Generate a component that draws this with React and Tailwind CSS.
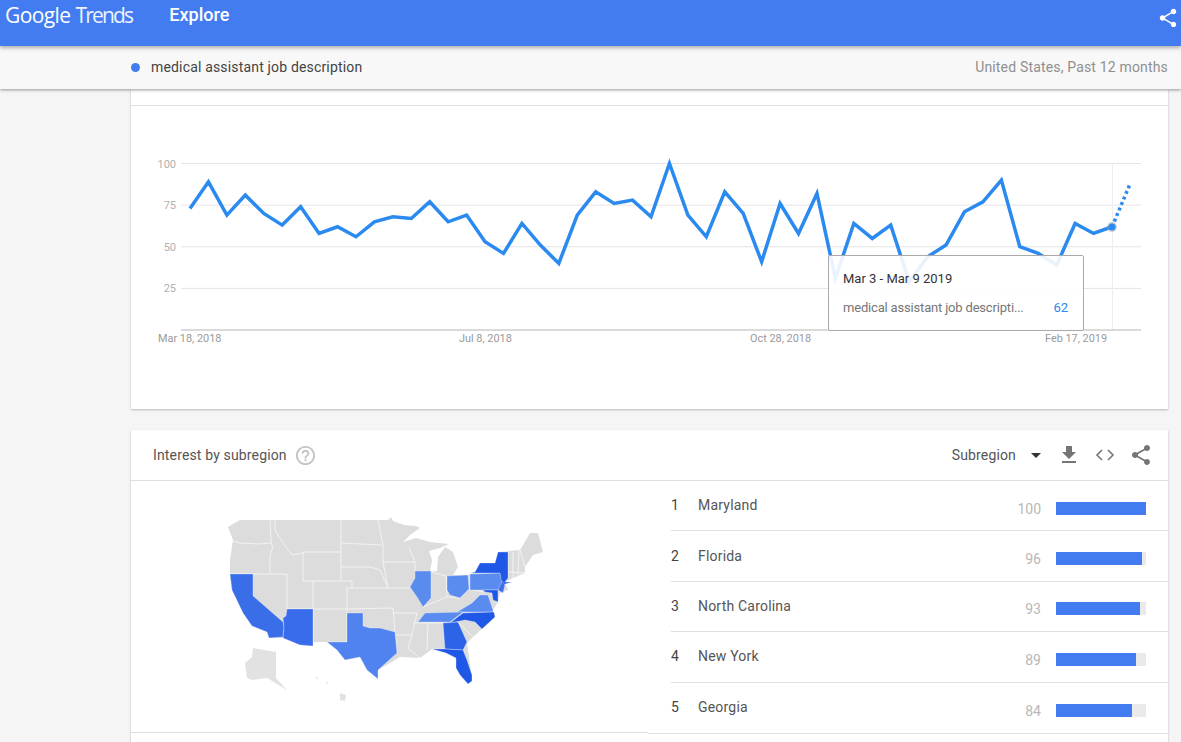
import React from 'react';

const values = [73, 89, 69, 81, 70, 63, 74, 58, 62, 56, 65, 68, 67, 77, 65, 69, 53, 46, 64, 51, 40, 69, 83, 76, 78, 68, 100, 69, 56, 83, 70, 41, 76, 58, 82, 31, 64, 55, 63, 29, 44, 51, 71, 77, 90, 50, 46, 39, 64, 58, 62];

const regions = [
  { rank: 1, name: 'Maryland', value: 100 },
  { rank: 2, name: 'Florida', value: 96 },
  { rank: 3, name: 'North Carolina', value: 93 },
  { rank: 4, name: 'New York', value: 89 },
  { rank: 5, name: 'Georgia', value: 84 },
];

const usOutline = '240,520 388,520 391,517 393,521 404,525 416,526 420,528 410,535 403,542 416,538 430,542 449,544 440,548 429,551 432,560 430,572 437,571 438,557 445,547 453,552 458,567 453,575 468,575 475,572 480,563 495,563 498,552 520,550 530,533 538,533 543,552 533,555 525,567 525,573 513,578 505,582 508,590 500,593 498,602 493,610 495,617 482,629 473,637 467,643 472,680 468,684 458,670 455,657 445,652 432,649 420,658 400,657 378,670 378,679 367,670 360,657 345,660 337,650 327,642 313,642 313,646 300,645 283,638 269,638 267,632 252,626 243,613 232,590 230,575 230,560 233,540 228,527';

const borders = [
  '233,541 240,543 258,544 272,543',
  '270,520 271,543 273,547 270,555 270,574',
  '230,574 287,574 287,609',
  '275,520 275,530 283,543 292,555 303,553',
  '303,552 341,552',
  '341,520 341,581',
  '303,552 303,581 352,581 352,588 347,588 347,642',
  '313,581 313,642',
  '287,609 347,609 393,608',
  '341,543 382,545',
  '341,567 370,567 380,570 388,588',
  '378,520 383,545 383,562 415,562',
  '383,562 388,588 410,588',
  '352,588 388,588',
  '393,608 395,632 397,653',
  '393,613 417,613 412,635 396,635',
  '412,635 408,648 420,658',
  '413,623 428,623 427,650',
  '428,623 443,623',
  '431,572 446,576 447,597',
  '423,607 447,597 460,598',
  '460,598 469,589 483,592',
  '415,562 415,571',
  '409,548 415,562',
  '525,567 520,550',
  '513,552 513,578',
  '519,551 518,575',
  '508,572 525,573',
  '458,622 473,637',
];

const shaded = [
  { color: '#396ee8', points: '230,574 253,574 253,596 283,622 284,627 283,637 269,638 267,632 252,626 243,613 232,590' },
  { color: '#386cea', points: '287,609 313,609 313,646 300,645 283,638 284,627 283,618 286,616' },
  { color: '#5083ef', points: '347,613 363,613 363,626 370,628 380,628 395,632 397,653 378,670 378,679 367,670 360,657 345,660 337,650 327,642 347,642' },
  { color: '#5a8cf0', points: '415,571 431,571 431,598 423,607 417,597 410,587 415,578' },
  { color: '#5a8cf0', points: '447,576 468,575 469,589 460,598 450,595 447,590' },
  { color: '#5a8cf0', points: '470,574 500,573 503,585 498,590 470,590' },
  { color: '#5a8cf0', points: '457,612 472,603 480,595 488,595 493,610 493,612' },
  { color: '#5a8cf0', points: '425,613 463,612 450,622 418,622' },
  { color: '#1f57e7', points: '475,572 480,563 495,563 498,552 508,552 508,578 505,582 512,582 502,585 500,573 470,573' },
  { color: '#3c70ea', points: '502,581 505,585 503,593 498,590' },
  { color: '#1f57e7', points: '483,590 498,590 498,602 493,600 492,593 485,592' },
  { color: '#1f57e7', points: '463,613 494,612 495,617 482,629 475,622 465,620 450,623' },
  { color: '#2c64e8', points: '443,623 458,622 467,642 463,650 445,649' },
  { color: '#1f57e7', points: '432,649 445,649 463,650 467,660 472,675 472,681 468,684 460,675 456,668 456,658 446,653' },
];

const UsMap = () => (
  <svg width="350" height="200" viewBox="210 510 350 200">
    <polygon points={usOutline} fill="#dcdcdc" />
    {borders.map((b) => (
      <polyline key={b} points={b} fill="none" stroke="#f4f4f4" strokeWidth="0.9" />
    ))}
    {shaded.map((s) => (
      <polygon key={s.points} points={s.points} fill={s.color} stroke="#ffffff" strokeOpacity="0.5" strokeWidth="0.6" />
    ))}
    <polygon points="253,648 276,652 276,678 287,690 267,678 252,680 247,678 245,663 252,657" fill="#e2e2e2" />
    <polygon points="340,693 346,695 345,701 340,700" fill="#e2e2e2" />
    <circle cx="327" cy="683" r="1.2" fill="#ececec" />
    <circle cx="317" cy="678" r="1.2" fill="#ececec" />
  </svg>
);

const ShareIcon = ({ className }) => (
  <svg className={className} viewBox="0 0 24 24" fill="currentColor">
    <path d="M18 16.08c-.76 0-1.44.3-1.96.77L8.91 12.7c.05-.23.09-.46.09-.7s-.04-.47-.09-.7l7.05-4.11c.54.5 1.25.81 2.04.81 1.66 0 3-1.34 3-3s-1.34-3-3-3-3 1.34-3 3c0 .24.04.47.09.7L8.04 9.81C7.5 9.31 6.79 9 6 9c-1.66 0-3 1.34-3 3s1.34 3 3 3c.79 0 1.5-.31 2.04-.81l7.12 4.16c-.05.21-.08.43-.08.65 0 1.61 1.31 2.92 2.92 2.92 1.61 0 2.92-1.31 2.92-2.92s-1.31-2.92-2.92-2.92z" />
  </svg>
);

const TrendChart = () => {
  const xAt = (i) => 190 + i * 18.44;
  const yAt = (v) => 330 - v * 1.665;
  const line = values.map((v, i) => `${xAt(i)},${yAt(v)}`).join(' ');

  return (
    <svg className="block" width="1037" height="303" viewBox="131 106 1037 303">
      {[100, 75, 50, 25].map((v) => (
        <g key={v}>
          <line x1="181" x2="1141" y1={yAt(v)} y2={yAt(v)} stroke="#e4e4e4" />
          <text x="176" y={yAt(v) + 4} textAnchor="end" fontSize="11" fill="#b0b0b0">{v}</text>
        </g>
      ))}
      <line x1="1112.5" x2="1112.5" y1="163" y2="330" stroke="#eeeeee" />
      <line x1="181" x2="1141" y1="330" y2="330" stroke="#b5b5b5" />
      <polyline points={line} fill="none" stroke="#2a8aef" strokeWidth="3.5" strokeLinejoin="miter" />
      <line x1="1112" y1="227" x2="1130" y2="184" stroke="#2a8aef" strokeWidth="3.5" strokeDasharray="3 3" />
      <circle cx="1112" cy="227" r="5" fill="#9aa0a6" opacity="0.5" />
      <circle cx="1112" cy="227" r="3.5" fill="#2a8aef" />
      <text x="158" y="342" fontSize="10.9" fill="#9a9a9a">Mar 18, 2018</text>
      <text x="459" y="342" fontSize="10.9" fill="#9a9a9a">Jul 8, 2018</text>
      <text x="750" y="342" fontSize="10.9" fill="#9a9a9a">Oct 28, 2018</text>
      <text x="1045" y="342" fontSize="10.9" fill="#9a9a9a">Feb 17, 2019</text>
    </svg>
  );
};

const App = () => {
  return (
    <div className="relative h-[742px] overflow-hidden bg-[#f5f5f5] font-['Roboto',sans-serif]">
      {/* Top bar */}
      <header className="relative z-20 flex h-[46px] items-start bg-[#427cf0] pl-[5px] pr-[3px] text-white shadow-[0_2px_4px_rgba(0,0,0,0.3)]">
        <span className="mt-[1px] font-['Open_Sans',sans-serif] text-[21px] leading-[28px] tracking-[-0.6px]">Google</span>
        <span className="ml-[5px] mt-[1px] font-['Open_Sans',sans-serif] text-[21px] leading-[28px] tracking-[-1.8px] opacity-90">Trends</span>
        <span className="ml-[37px] mt-[3px] text-[18px] font-medium leading-[24px]">Explore</span>
        <ShareIcon className="ml-auto mt-[7px] h-[22px] w-[22px] translate-x-[1px]" />
      </header>

      {/* Search term bar */}
      <div className="relative z-10 flex h-[43px] items-center bg-[#f8f8f8] pl-[131px] pr-[13px] shadow-[0_1px_3px_rgba(0,0,0,0.4)]">
        <span className="h-[9px] w-[9px] rounded-full bg-[#427cf0]" />
        <span className="ml-[11px] text-[14px] tracking-[0.17px] text-[#444444]">medical assistant job description</span>
        <span className="ml-auto text-[14px] tracking-[0.17px] text-[#8f8f8f]">United States, Past 12 months</span>
      </div>

      <main className="pl-[131px] pr-[13px]">
        {/* Interest over time */}
        <section className="relative bg-white shadow-[0_1px_2px_rgba(0,0,0,0.25)]">
          <div className="h-[17px] border-b border-[#e0e0e0]" />
          <TrendChart />
          <div className="absolute left-[697px] top-[166px] h-[76px] w-[256px] rounded-[2px] border border-[#aaaaaa] bg-white/90 pl-[14px] pr-[15px] pt-[14px]">
            <div className="text-[13px] leading-[17px] text-[#333333]">Mar 3 - Mar 9 2019</div>
            <div className="mt-[12px] flex justify-between text-[13px] leading-[17px]">
              <span className="tracking-[-0.18px] text-[#777777]">medical assistant job descripti...</span>
              <span className="text-[#2a8aef]">62</span>
            </div>
          </div>
        </section>

        {/* Interest by subregion */}
        <section className="mt-[21px] bg-white shadow-[0_1px_2px_rgba(0,0,0,0.25)]">
          <div className="flex h-[51px] items-center border-b border-[#e0e0e0] pl-[22px] pr-[15px]">
            <span className="text-[14px] tracking-[0.15px] text-[#555555]">Interest by subregion</span>
            <svg className="ml-[7px] h-[23px] w-[23px] text-[#c4c4c4]" viewBox="0 0 24 24" fill="currentColor">
              <path d="M11 18h2v-2h-2v2zm1-16C6.48 2 2 6.48 2 12s4.48 10 10 10 10-4.48 10-10S17.52 2 12 2zm0 18c-4.41 0-8-3.59-8-8s3.59-8 8-8 8 3.59 8 8-3.59 8-8 8zm0-14c-2.21 0-4 1.79-4 4h2c0-1.1.9-2 2-2s2 .9 2 2c0 2-3 1.75-3 5h2c0-2.25 3-2.5 3-5 0-2.21-1.79-4-4-4z" />
            </svg>
            <span className="ml-auto text-[14px] tracking-[0.15px] text-[#555555]">Subregion</span>
            <span className="ml-[15px] h-0 w-0 border-x-[5px] border-t-[5px] border-x-transparent border-t-[#333333]" />
            <svg className="ml-[16px] h-[24px] w-[24px] text-[#757575]" viewBox="0 0 24 24" fill="currentColor">
              <path d="M19 9h-4V3H9v6H5l7 7 7-7zM5 18v2h14v-2H5z" />
            </svg>
            <svg className="ml-[12px] h-[24px] w-[24px] text-[#757575]" viewBox="0 0 24 24" fill="none" stroke="currentColor" strokeWidth="1.6">
              <polyline points="9,7 4,12 9,17" />
              <polyline points="15,7 20,12 15,17" />
            </svg>
            <ShareIcon className="ml-[12px] h-[24px] w-[24px] text-[#757575]" />
          </div>

          <div className="flex">
            <div className="h-[252px] w-[517px] border-b border-[#e0e0e0] pl-[79px] pt-[29px]">
              <UsMap />
            </div>
            <ul className="flex-1 border-b border-[#e0e0e0] pl-[23px]">
              {regions.map((r) => (
                <li key={r.rank} className="flex h-[50.4px] items-center border-b border-[#e0e0e0] pr-[22px] last:border-b-0">
                  <span className="w-[27px] text-[14px] text-[#444444]">{r.rank}</span>
                  <span className="text-[14px] tracking-[0.2px] text-[#555555]">{r.name}</span>
                  <span className="ml-auto mt-[7px] text-[14px] text-[#b8b8b8]">{r.value}</span>
                  <div className="ml-[15px] mt-[5px] h-[13px] w-[90px] bg-[#eaeaea]">
                    <div className="h-full bg-[#427cf0]" style={{ width: `${r.value}%` }} />
                  </div>
                </li>
              ))}
            </ul>
          </div>
          <div className="h-[40px]" />
        </section>
      </main>
    </div>
  );
};

export default App;
